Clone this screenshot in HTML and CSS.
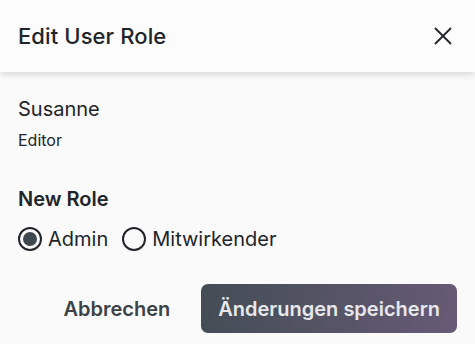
FILE: index.html
```html
<!DOCTYPE html>
<html lang="en">
<head>
    <meta charset="UTF-8">
    <meta name="viewport" content="width=device-width, initial-scale=1.0">
    <title>Edit User Role</title>
    <link rel="stylesheet" href="styles.css">
</head>
<body>
    <div class="dialog">
        <header class="dialog-header">
            <h2>Edit User Role</h2>
            <button class="close-btn" aria-label="Close">
                <svg width="20" height="20" viewBox="0 0 20 20">
                    <path d="M2 2 L18 18 M18 2 L2 18" stroke="#212529" stroke-width="1.8" fill="none"/>
                </svg>
            </button>
        </header>
        <div class="dialog-body">
            <div class="user-name">Susanne</div>
            <div class="user-role">Editor</div>
            <div class="section-title">New Role</div>
            <div class="radio-row">
                <label class="radio">
                    <input type="radio" name="role" checked>
                    <span class="radio-mark"></span>
                    Admin
                </label>
                <label class="radio">
                    <input type="radio" name="role">
                    <span class="radio-mark"></span>
                    Mitwirkender
                </label>
            </div>
        </div>
        <footer class="dialog-footer">
            <button class="btn-cancel">Abbrechen</button>
            <button class="btn-save">Änderungen speichern</button>
        </footer>
    </div>
</body>
</html>
```

FILE: styles.css
```css
body {
    margin: 0;
    font-family: 'Inter', 'Liberation Sans', sans-serif;
    background-color: #fafafa;
    color: #212529;
}

.dialog {
    width: 475px;
    height: 344px;
    overflow: hidden;
}

.dialog-header {
    height: 72px;
    display: flex;
    align-items: center;
    justify-content: space-between;
    padding: 0 18px;
    background-color: #fcfcfc;
    box-shadow: 0 3px 6px rgba(0, 0, 0, 0.12);
    position: relative;
}

.dialog-header h2 {
    margin: 0;
    font-size: 22px;
    font-weight: 500;
    letter-spacing: 0.1px;
}

.close-btn {
    border: none;
    background: none;
    padding: 0;
    width: 20px;
    height: 20px;
    margin-right: 4px;
    cursor: pointer;
}

.dialog-body {
    padding: 25px 18px 0;
}

.user-name {
    font-size: 20px;
    line-height: 24px;
}

.user-role {
    font-size: 16px;
    line-height: 20px;
    margin-top: 9px;
}

.section-title {
    font-size: 20px;
    font-weight: 600;
    line-height: 24px;
    margin-top: 37px;
}

.radio-row {
    display: flex;
    gap: 14px;
    margin-top: 16px;
}

.radio {
    display: flex;
    align-items: center;
    gap: 6px;
    font-size: 20px;
    line-height: 24px;
    cursor: pointer;
}

.radio input {
    display: none;
}

.radio-mark {
    width: 24px;
    height: 24px;
    box-sizing: border-box;
    border: 2px solid #212529;
    border-radius: 50%;
    display: flex;
    align-items: center;
    justify-content: center;
}

.radio input:checked + .radio-mark::after {
    content: '';
    width: 14px;
    height: 14px;
    border-radius: 50%;
    background-color: #3f474e;
}

.dialog-footer {
    display: flex;
    justify-content: flex-end;
    align-items: center;
    gap: 15px;
    padding: 0 18px;
    margin-top: 33px;
}

.btn-cancel {
    border: none;
    background: none;
    font-family: inherit;
    font-size: 20px;
    font-weight: 600;
    color: #3a4248;
    padding: 12px 16px;
    cursor: pointer;
}

.btn-save {
    border: none;
    border-radius: 7px;
    height: 49px;
    padding: 0 17px;
    font-family: inherit;
    font-size: 20px;
    font-weight: 600;
    color: #e8e8ea;
    background: linear-gradient(100deg, #434d55, #675a76);
    cursor: pointer;
}
```
